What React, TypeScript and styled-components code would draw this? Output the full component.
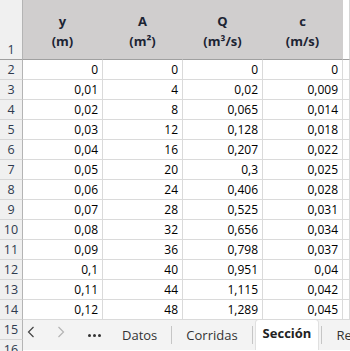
import { createGlobalStyle, styled } from "styled-components";

const GlobalStyle = createGlobalStyle`
  html, body {
    margin: 0;
    padding: 0;
    background: #ffffff;
    overflow: hidden;
  }
  body {
    font-family: "Open Sans", "Liberation Sans", sans-serif;
  }
`;

const COLS = "23px repeat(4, 80px) 1fr";

const StyledSheet = styled.div`
  width: 350px;
  height: 351px;
  overflow: hidden;
  display: flex;
  flex-direction: column;
  font-size: 12px;
  color: #000;
`;

const StyledTopStrip = styled.div`
  display: grid;
  grid-template-columns: ${COLS};
  height: 2px;
  background: #f0f0f0;

  > div {
    border-right: 1px solid #c8c8c8;
  }
`;

const StyledRow = styled.div<{ $header?: boolean }>`
  display: grid;
  grid-template-columns: ${COLS};
  height: ${(p) => (p.$header ? "60px" : "20px")};
  flex-shrink: 0;
`;

const StyledRowNumber = styled.div<{ $header?: boolean }>`
  display: flex;
  justify-content: center;
  align-items: ${(p) => (p.$header ? "flex-end" : "center")};
  padding-bottom: ${(p) => (p.$header ? "1px" : "0")};
  background: #f0f0f0;
  color: #2e3a4e;
  font-size: 12.5px;
  border-right: 1px solid #b4b4b4;
  border-bottom: 1px solid ${(p) => (p.$header ? "#a0a0a0" : "#d6d6d6")};
  box-sizing: border-box;
`;

const StyledHeadCell = styled.div<{ $blank?: boolean }>`
  display: flex;
  flex-direction: column;
  align-items: center;
  justify-content: center;
  padding-top: 3px;
  background: ${(p) => (p.$blank ? "#ffffff" : "#d0cece")};
  border-bottom: 1px solid #a0a0a0;
  border-right: 1px solid ${(p) => (p.$blank ? "#d6d6d6" : "#d0cece")};
  box-sizing: border-box;
  font-weight: 700;
  color: #1c2433;
  line-height: 20px;
  font-size: 13px;
`;

const StyledCell = styled.div`
  display: flex;
  align-items: center;
  justify-content: flex-end;
  padding-right: 4px;
  border-right: 1px solid #dadada;
  border-bottom: 1px solid #dadada;
  box-sizing: border-box;
  white-space: nowrap;
`;

const StyledBottom = styled.div`
  display: flex;
  flex: 1;
`;

const StyledBottomNumbers = styled.div`
  display: flex;
  flex-direction: column;
  width: 23px;
  flex-shrink: 0;

  > div {
    height: 20px;
    flex-shrink: 0;
  }
`;

const StyledTabBar = styled.div`
  flex: 1;
  display: flex;
  align-items: center;
  height: 30px;
  background: #f3f3f3;
  color: #333;
  font-size: 13px;
  white-space: nowrap;
  overflow: hidden;
`;

const StyledNavButton = styled.div<{ $disabled?: boolean; $width: number }>`
  display: flex;
  align-items: center;
  justify-content: center;
  width: ${(p) => p.$width}px;
  height: 30px;
  flex-shrink: 0;
  margin-top: -6px;
  color: ${(p) => (p.$disabled ? "#b4b4b4" : "#444")};
`;

const StyledMore = styled.div`
  display: flex;
  align-items: center;
  justify-content: center;
  width: 22px;
  margin-right: 3px;
  flex-shrink: 0;
  gap: 2px;

  > span {
    width: 3px;
    height: 3px;
    border-radius: 50%;
    background: #333;
  }
`;

const StyledSeparator = styled.div`
  width: 1px;
  height: 18px;
  background: #c6c6c6;
  flex-shrink: 0;
`;

const StyledTab = styled.div<{ $active?: boolean }>`
  display: flex;
  align-items: ${(p) => (p.$active ? "flex-start" : "center")};
  align-self: stretch;
  margin: ${(p) => (p.$active ? "0 3px" : "0 4px")};
  padding: ${(p) => (p.$active ? "2px 7px 0" : "0 10px")};
  flex-shrink: 0;
  background: ${(p) => (p.$active ? "#ffffff" : "transparent")};
  font-weight: ${(p) => (p.$active ? 700 : 400)};
  color: ${(p) => (p.$active ? "#222" : "#333")};
  border-top-left-radius: 3px;
  border-top-right-radius: 3px;
  box-shadow: ${(p) => (p.$active ? "0 0 0 1px #e0e0e0" : "none")};
  line-height: 22px;
`;

const Chevron = ({ dir }: { dir: "left" | "right" }) => (
  <svg width="8" height="12" viewBox="0 0 8 12">
    <path
      d={dir === "left" ? "M6.5 1 L1.5 6 L6.5 11" : "M1.5 1 L6.5 6 L1.5 11"}
      fill="none"
      stroke="currentColor"
      strokeWidth="1.2"
    />
  </svg>
);

const headers = [
  ["y", "(m)"],
  ["A", "(m²)"],
  ["Q", "(m³/s)"],
  ["c", "(m/s)"],
];

const rows: string[][] = [
  ["0", "0", "0", "0"],
  ["0,01", "4", "0,02", "0,009"],
  ["0,02", "8", "0,065", "0,014"],
  ["0,03", "12", "0,128", "0,018"],
  ["0,04", "16", "0,207", "0,022"],
  ["0,05", "20", "0,3", "0,025"],
  ["0,06", "24", "0,406", "0,028"],
  ["0,07", "28", "0,525", "0,031"],
  ["0,08", "32", "0,656", "0,034"],
  ["0,09", "36", "0,798", "0,037"],
  ["0,1", "40", "0,951", "0,04"],
  ["0,11", "44", "1,115", "0,042"],
  ["0,12", "48", "1,289", "0,045"],
];

export default function App() {
  return (
    <>
      <GlobalStyle />
      <StyledSheet>
        <StyledTopStrip>
          <div />
          <div />
          <div />
          <div />
          <div />
          <div />
        </StyledTopStrip>
        <StyledRow $header>
          <StyledRowNumber $header>1</StyledRowNumber>
          {headers.map(([name, unit]) => (
            <StyledHeadCell key={name}>
              <span>{name}</span>
              <span>{unit}</span>
            </StyledHeadCell>
          ))}
          <StyledHeadCell $blank />
        </StyledRow>
        {rows.map((row, i) => (
          <StyledRow key={i}>
            <StyledRowNumber>{i + 2}</StyledRowNumber>
            {row.map((value, j) => (
              <StyledCell key={j}>{value}</StyledCell>
            ))}
            <StyledCell />
          </StyledRow>
        ))}
        <StyledBottom>
          <StyledBottomNumbers>
            <StyledRowNumber>15</StyledRowNumber>
            <StyledRowNumber>16</StyledRowNumber>
          </StyledBottomNumbers>
          <StyledTabBar>
            <StyledNavButton $width={16}>
              <Chevron dir="left" />
            </StyledNavButton>
            <StyledNavButton $width={44} $disabled>
              <Chevron dir="right" />
            </StyledNavButton>
            <StyledMore>
              <span />
              <span />
              <span />
            </StyledMore>
            <StyledTab>Datos</StyledTab>
            <StyledSeparator />
            <StyledTab>Corridas</StyledTab>
            <StyledSeparator />
            <StyledTab $active>Sección</StyledTab>
            <StyledSeparator />
            <StyledTab>Resultados</StyledTab>
          </StyledTabBar>
        </StyledBottom>
      </StyledSheet>
    </>
  );
}
